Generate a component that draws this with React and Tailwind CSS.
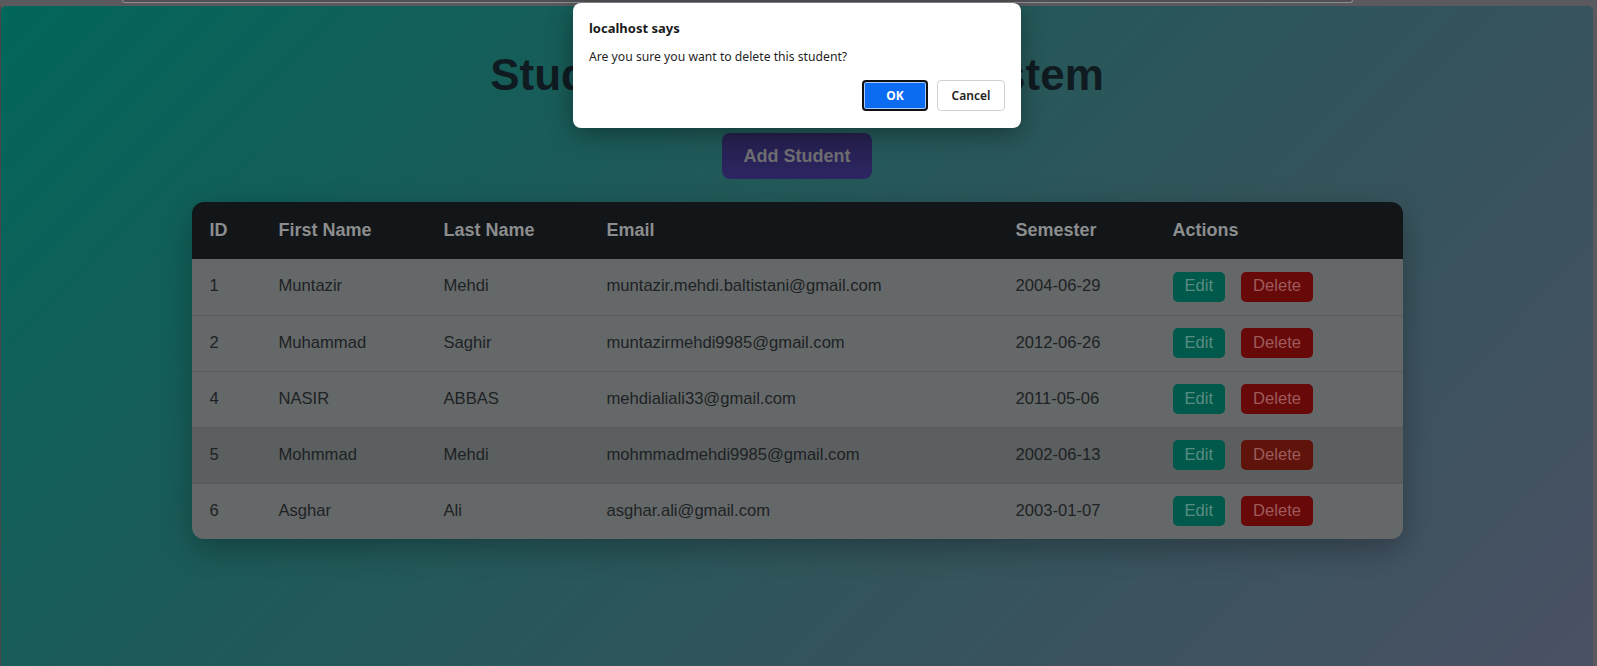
const students = [
  { id: 1, first: "Muntazir", last: "Mehdi", email: "muntazir.mehdi.baltistani@gmail.com", semester: "2004-06-29" },
  { id: 2, first: "Muhammad", last: "Saghir", email: "muntazirmehdi9985@gmail.com", semester: "2012-06-26" },
  { id: 4, first: "NASIR", last: "ABBAS", email: "mehdialiali33@gmail.com", semester: "2011-05-06" },
  { id: 5, first: "Mohmmad", last: "Mehdi", email: "mohmmadmehdi9985@gmail.com", semester: "2002-06-13", hover: true },
  { id: 6, first: "Asghar", last: "Ali", email: "asghar.ali@gmail.com", semester: "2003-01-07" },
];

const headers = ["ID", "First Name", "Last Name", "Email", "Semester", "Actions"];

export default function App() {
  return (
    <div className="relative h-[666px] w-full overflow-hidden bg-[#5a5a5e] font-['Liberation_Sans',Arial,sans-serif]">
      {/* browser chrome edge */}
      <div className="h-[6px] pl-[122px]">
        <div className="h-[3px] w-[1231px] rounded-b-[3px] border-x border-b border-[#8e8e92] bg-[#505054]" />
      </div>

      <div className="flex h-[660px]">
        <div className="w-px bg-[#48484c]" />

        {/* dimmed page */}
        <main className="flex w-[1592px] flex-col items-center rounded-t-[5px] bg-[linear-gradient(135deg,#02665a_0%,#1d5a58_35%,#33545b_65%,#4a5164_100%)] pt-[42px]">
          <h1 className="text-[44px] leading-[53px] font-bold text-[#0f1b21]">Student Management System</h1>

          <button className="mt-8 h-[46px] rounded-lg bg-[linear-gradient(180deg,#25204e,#2c2562)] px-[22px] text-[18px] font-bold text-[#6f6f72]">
            Add Student
          </button>

          <div className="mt-[23px] w-[1211px] overflow-hidden rounded-xl shadow-[0_10px_30px_rgba(0,0,0,0.28)]">
            <table className="w-full table-fixed border-collapse text-left">
              <colgroup>
                <col className="w-[69px]" />
                <col className="w-[165px]" />
                <col className="w-[163px]" />
                <col className="w-[409px]" />
                <col className="w-[157px]" />
                <col className="w-[248px]" />
              </colgroup>
              <thead>
                <tr className="h-[57px] bg-[#121618]">
                  {headers.map((h) => (
                    <th key={h} className="pl-[18px] text-[18px] font-bold text-[#8c8d8e]">
                      {h}
                    </th>
                  ))}
                </tr>
              </thead>
              <tbody className="text-[16.6px] text-[#1d2225]">
                {students.map((s, i) => (
                  <tr
                    key={s.id}
                    className={`h-[56px] ${i < students.length - 1 ? "border-b border-[#575b5b]" : ""} ${s.hover ? "bg-[#5b5f5f]" : "bg-[#656868]"}`}
                  >
                    <td className="pl-[18px]">{s.id}</td>
                    <td className="pl-[18px]">{s.first}</td>
                    <td className="pl-[18px]">{s.last}</td>
                    <td className="pl-[18px]">{s.email}</td>
                    <td className="pl-[18px]">{s.semester}</td>
                    <td className="pl-[18px]">
                      <div className="flex gap-4">
                        <button className="h-[30px] rounded-[5px] bg-[#00594b] px-3 text-[#5a8d81]">Edit</button>
                        <button className={`h-[30px] rounded-[5px] px-3 text-[#9d5b5b] ${s.hover ? "bg-[#5e130b]" : "bg-[#670909]"}`}>
                          Delete
                        </button>
                      </div>
                    </td>
                  </tr>
                ))}
              </tbody>
            </table>
          </div>
        </main>

        <div className="flex-1 bg-[#5a5a5e]" />
      </div>

      {/* confirm dialog */}
      <div className="absolute left-[573px] top-[3px] w-[448px] rounded-lg bg-white px-4 pt-4 pb-[17px] font-['Noto_Sans','Open_Sans',sans-serif] shadow-[0_6px_24px_rgba(0,0,0,0.35)]">
        <div className="text-[13px] leading-[18px] font-bold text-[#1b1b1b]">localhost says</div>
        <div className="mt-[11px] text-[12.2px] leading-[18px] text-[#1f1f1f]">Are you sure you want to delete this student?</div>
        <div className="mt-[14px] flex justify-end gap-[9px]">
          <button className="h-[31px] w-[66px] rounded-[4px] border-2 border-[#101010] bg-[#0b6cf2] text-[12px] font-bold text-white shadow-[inset_0_0_0_1px_#a9c9ff]">
            OK
          </button>
          <button className="h-[31px] w-[68px] rounded-[4px] border border-[#d2d2d2] bg-white text-[12px] font-semibold text-[#202020]">
            Cancel
          </button>
        </div>
      </div>
    </div>
  );
}
